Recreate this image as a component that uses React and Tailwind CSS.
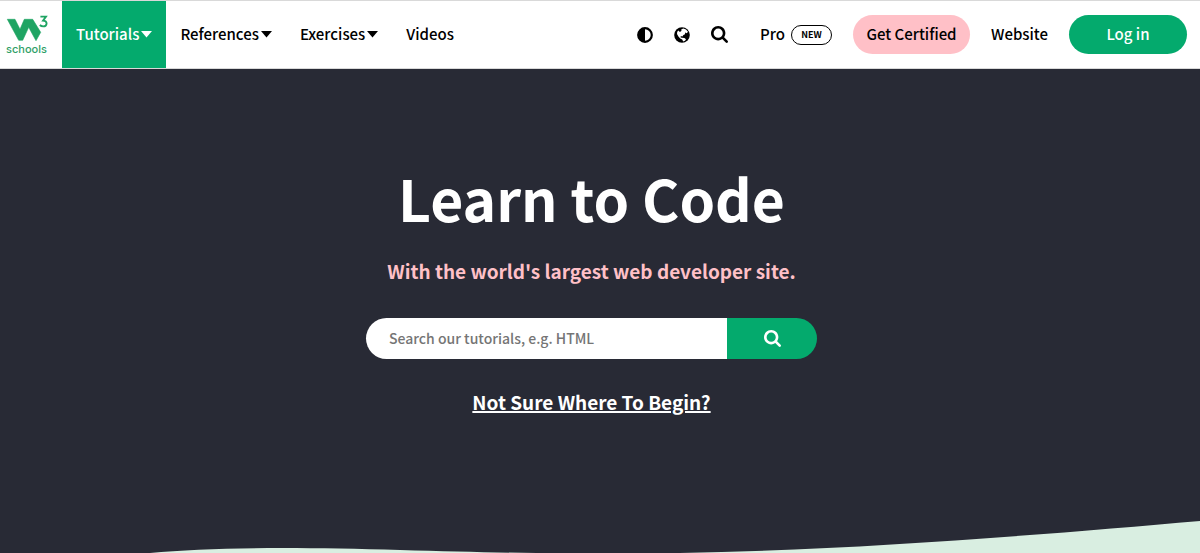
import { useState } from "react";

const menus = [
  { label: "Tutorials", caret: true, active: true },
  { label: "References", caret: true },
  { label: "Exercises", caret: true },
  { label: "Videos" },
];

function Logo() {
  return (
    <svg viewBox="0 0 42 40" className="w-[42px] h-10" aria-hidden="true">
      <path
        d="M1.3 4.3H9L14 14.3L18.3 4.3H26.7L34.7 17.3L30 25.7L22.7 12.3L16.7 25.3H12.7Z"
        fill="#1fa463"
        stroke="#1fa463"
        strokeWidth="0.6"
      />
      <path
        d="M34.4 1.6H40L37 5.6Q40.6 5.8 40.6 8.6Q40.4 11.4 37.2 11.4Q35.2 11.4 33.8 10"
        fill="none"
        stroke="#1fa463"
        strokeWidth="1.8"
      />
      <text
        x="0"
        y="38"
        fontSize="11"
        className="font-['Inter',sans-serif] font-medium"
        fill="#2f9f68"
      >
        schools
      </text>
    </svg>
  );
}

function Caret() {
  return (
    <svg viewBox="0 0 11 7" className="w-[11px] h-[7px]" aria-hidden="true">
      <path d="M0 0H11L5.5 6.5Z" fill="currentColor" />
    </svg>
  );
}

function ContrastIcon() {
  return (
    <svg viewBox="0 0 16 16" className="size-4" aria-hidden="true">
      <circle cx="8" cy="8" r="6.8" fill="none" stroke="currentColor" strokeWidth="2.2" />
      <path d="M8 1A7 7 0 0 0 8 15Z" fill="currentColor" />
    </svg>
  );
}

function GlobeIcon() {
  return (
    <svg viewBox="0 0 16 16" className="size-4" aria-hidden="true">
      <circle cx="8" cy="8" r="7.8" fill="currentColor" />
      <path
        d="M7.4 2.2L9.4 1.6L12 2.4L14 4.8L12.8 6.2L11.2 5.6L11 7.2L9.4 8L8.4 9.6L6.8 9L6.6 10.4L8 10.8L10.4 11L12 12.2L11 13.8L9.2 14.6L8.2 12.4L6.2 11.4L4.4 9.4L3 7L3.2 4.8L4.6 3.4L5.8 5L7.4 4Z"
        fill="white"
      />
    </svg>
  );
}

function SearchIcon() {
  return (
    <svg viewBox="64 128 1664 1664" className="size-[17px]" aria-hidden="true">
      <path
        d="M1216 832q0-185-131.5-316.5t-316.5-131.5-316.5 131.5-131.5 316.5 131.5 316.5 316.5 131.5 316.5-131.5 131.5-316.5zm512 832q0 52-38 90t-90 38q-54 0-90-38l-343-342q-179 124-399 124-143 0-273.5-55.5t-225-150-150-225-55.5-273.5 55.5-273.5 150-225 225-150 273.5-55.5 273.5 55.5 225 150 150 225 55.5 273.5q0 220-124 399l343 343q37 37 37 90z"
        fill="currentColor"
      />
    </svg>
  );
}

function Navbar() {
  return (
    <header className="flex items-stretch justify-between h-[69px] bg-white border-y border-[#d9d9d9] text-black text-[15px] font-medium">

      <div className="flex">

        <a href="#home" aria-label="W3Schools" className="w-[62px] pl-[6px] pt-[14px]">
          <Logo />
        </a>

        <nav className="flex">
          {
            menus.map((menu) => (
              <a
                key={menu.label}
                href="#menu"
                className={
                  menu.active
                    ? "flex items-center gap-[2px] px-[14px] bg-[#04aa6d] text-white"
                    : "flex items-center gap-[2px] px-[14px]"
                }
              >
                {menu.label}
                {menu.caret && <Caret />}
              </a>
            ))
          }
        </nav>

      </div>

      <div className="flex items-center pr-[13px]">

        <div className="flex items-center gap-[21px] mr-8">
          <button aria-label="Contrast"><ContrastIcon /></button>
          <button aria-label="Language"><GlobeIcon /></button>
          <button aria-label="Search"><SearchIcon /></button>
        </div>

        <a href="#pro" className="flex items-center gap-[6px] mr-[21px]">
          Pro
          <span className="flex items-center justify-center w-[41px] h-5 border border-black rounded-full text-[9px] font-bold">
            NEW
          </span>
        </a>

        <a
          href="#certified"
          className="flex items-center justify-center w-[117px] h-[39px] mr-[21px] rounded-full bg-[#ffc0c7]"
        >
          Get Certified
        </a>

        <a href="#website" className="mr-[21px]">Website</a>

        <a
          href="#login"
          className="flex items-center justify-center w-[118px] h-[39px] rounded-full bg-[#04aa6d] text-white"
        >
          Log in
        </a>

      </div>

    </header>
  );
}

function Hero() {

  const [query, setQuery] = useState("");

  return (
    <main className="flex flex-col items-center bg-[#282a35] text-white">

      <div className="flex flex-col items-center pt-[84px] pr-[17px]">

        <h1 className="text-[57px] leading-[88px] font-bold">
          Learn to Code
        </h1>

        <p className="mt-4 text-[19px] leading-7 font-bold text-[#ffc0c7]">
          With the world's largest web developer site.
        </p>

        <form
          className="flex mt-[33px] w-[451px] h-[41px]"
          onSubmit={(event) => event.preventDefault()}
        >
          <input
            type="text"
            aria-label="Search our tutorials"
            placeholder="Search our tutorials, e.g. HTML"
            value={query}
            onChange={(event) => setQuery(event.target.value)}
            className="flex-1 min-w-0 pl-[23px] rounded-l-full bg-white text-black text-[14px] font-medium placeholder:text-[#757575]"
          />
          <button
            aria-label="Search"
            className="flex items-center justify-center w-[90px] rounded-r-full bg-[#04aa6d]"
          >
            <SearchIcon />
          </button>
        </form>

        <a href="#begin" className="mt-[29px] text-[19px] leading-7 font-bold underline decoration-2">
          Not Sure Where To Begin?
        </a>

      </div>

      <svg
        viewBox="0 0 1200 33"
        preserveAspectRatio="none"
        className="w-full h-[33px] mt-[104px]"
        aria-hidden="true"
      >
        <path
          d="M150 33C210 27 300 27 400 30C500 33 570 34 680 33C860 30 1050 14 1200 1V33Z"
          fill="#d9eee1"
        />
      </svg>

    </main>
  );
}

function App() {
  return (
    <div className="font-['Noto_Sans_CJK_SC','Noto_Sans',sans-serif]">
      <Navbar />
      <Hero />
    </div>
  );
}

export default App;
